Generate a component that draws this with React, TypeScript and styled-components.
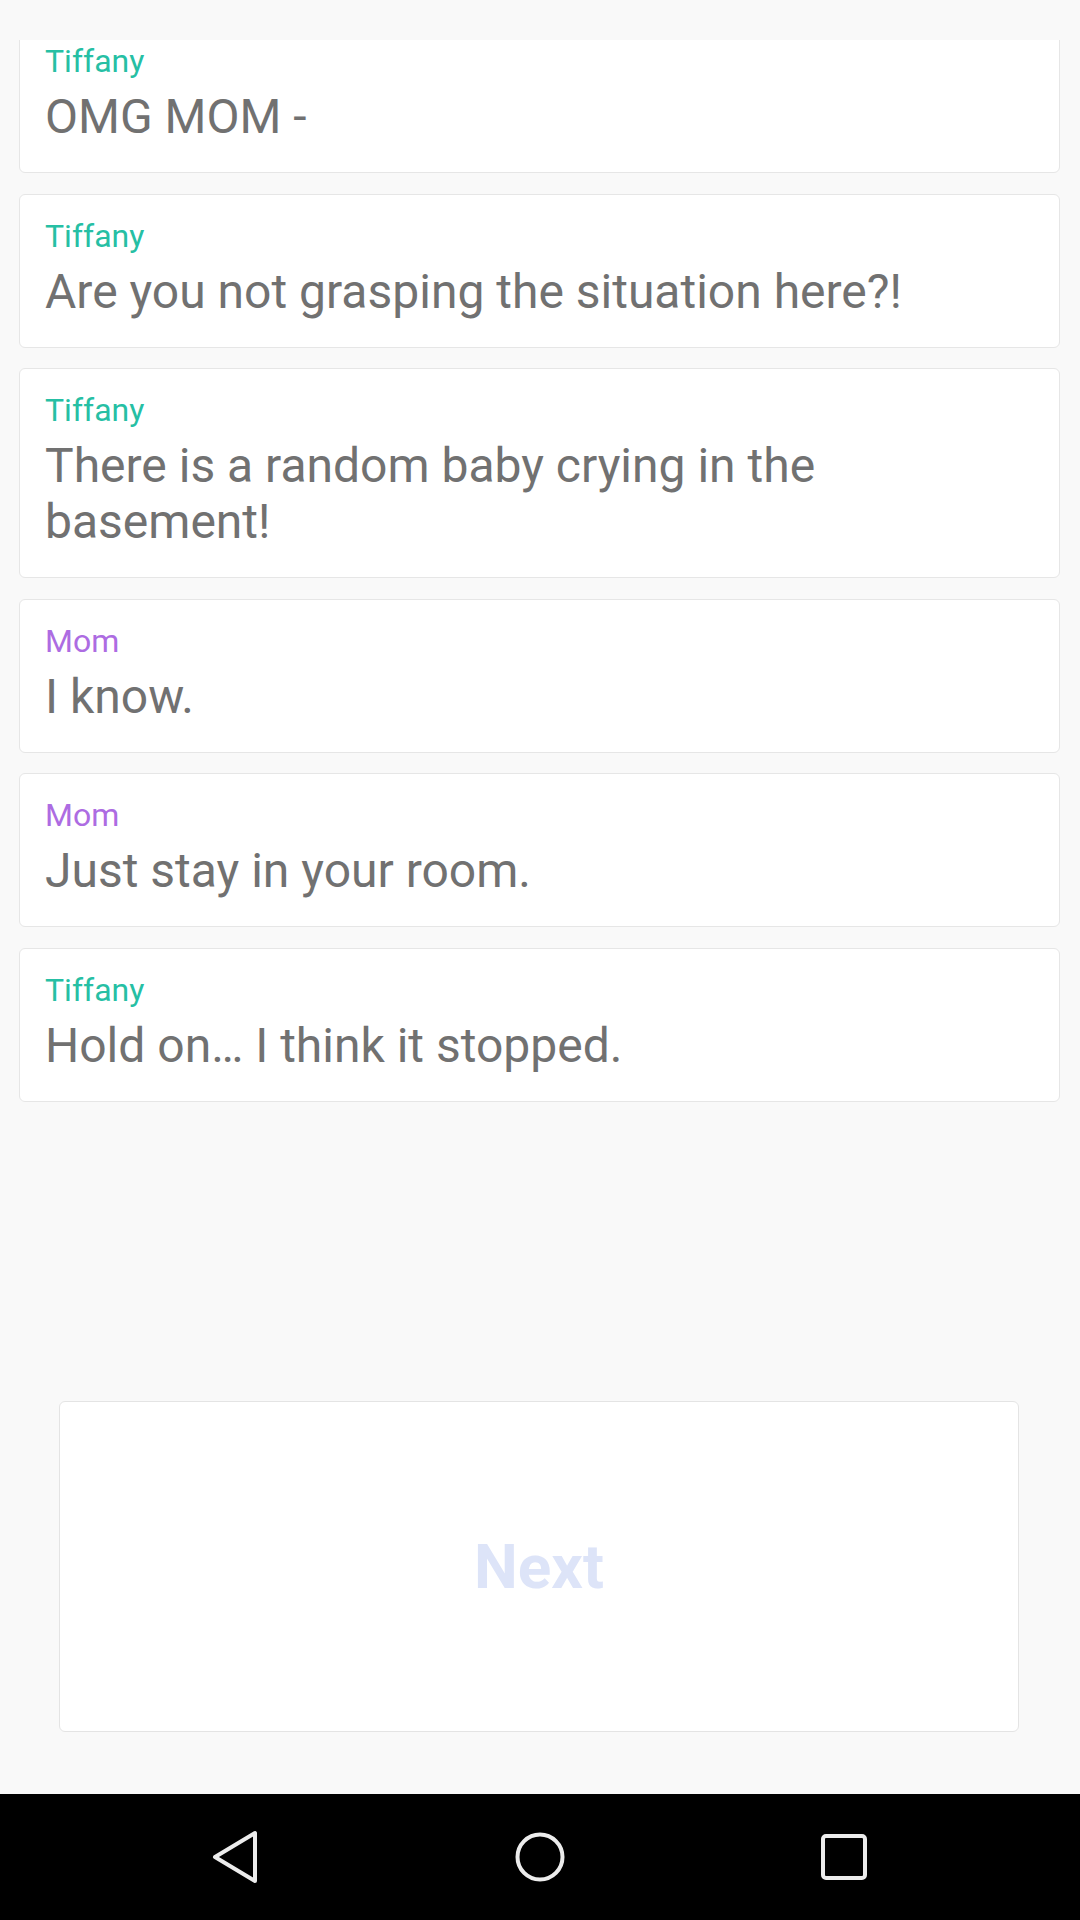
import React from "react";
import styled, { createGlobalStyle } from "styled-components";

type Speaker = "Tiffany" | "Mom";

const messages: { from: Speaker; text: string }[] = [
  { from: "Tiffany", text: "OMG MOM -" },
  { from: "Tiffany", text: "Are you not grasping the situation here?!" },
  { from: "Tiffany", text: "There is a random baby crying in the basement!" },
  { from: "Mom", text: "I know." },
  { from: "Mom", text: "Just stay in your room." },
  { from: "Tiffany", text: "Hold on… I think it stopped." },
];

const speakerColors: Record<Speaker, string> = {
  Tiffany: "#26bfa4",
  Mom: "#ad6ce2",
};

function App() {
  return (
    <>
      <GlobalStyle />
      <Screen>
        <Content>
          <ListViewport>
            <List>
              {messages.map((m, i) => (
                <Card key={i}>
                  <Name $color={speakerColors[m.from]}>{m.from}</Name>
                  <Message>{m.text}</Message>
                </Card>
              ))}
            </List>
          </ListViewport>
          <Footer>
            <NextButton>Next</NextButton>
          </Footer>
        </Content>
        <NavBar>
          <NavIcon>
            <svg width="60" height="60" viewBox="0 0 60 60">
              <path
                d="M49 6 L49 54 L9 30 Z"
                fill="none"
                stroke="#ececec"
                strokeWidth="4"
                strokeLinejoin="round"
              />
            </svg>
          </NavIcon>
          <NavIcon>
            <svg width="60" height="60" viewBox="0 0 60 60">
              <circle
                cx="30"
                cy="30"
                r="22.5"
                fill="none"
                stroke="#ececec"
                strokeWidth="4"
              />
            </svg>
          </NavIcon>
          <NavIcon>
            <svg width="60" height="60" viewBox="0 0 60 60">
              <rect
                x="9"
                y="9"
                width="42"
                height="42"
                rx="3"
                fill="none"
                stroke="#ececec"
                strokeWidth="4"
              />
            </svg>
          </NavIcon>
        </NavBar>
      </Screen>
    </>
  );
}

const GlobalStyle = createGlobalStyle`
  body {
    margin: 0;
    background: #f9f9f9;
    font-family: Roboto, "Noto Sans", sans-serif;
  }
`;

const Screen = styled.div`
  width: 1080px;
  height: 1920px;
  display: flex;
  flex-direction: column;
  background: #f9f9f9;
`;

const Content = styled.div`
  flex: 1;
  display: flex;
  flex-direction: column;
`;

const ListViewport = styled.div`
  margin-top: 40px;
  overflow: hidden;
`;

const List = styled.div`
  margin-top: -21px;
  padding: 0 20px 0 19px;
  display: flex;
  flex-direction: column;
  gap: 20.6px;
`;

const Card = styled.div`
  background: #fff;
  border: 1px solid #e6e6e6;
  border-radius: 6px;
  padding: 22px 60px 27px 25px;
`;

const Name = styled.div<{ $color: string }>`
  color: ${(p) => p.$color};
  font-size: 32px;
  line-height: 38px;
  margin-bottom: 9px;
`;

const Message = styled.div`
  color: #717171;
  font-size: 48px;
  line-height: 56px;
`;

const Footer = styled.div`
  margin-top: auto;
  padding: 0 61px 62px 59px;
`;

const NextButton = styled.div`
  height: 329px;
  background: #fff;
  border: 1.5px solid #e4e4e4;
  border-radius: 6px;
  display: flex;
  align-items: center;
  justify-content: center;
  color: #dde4f8;
  font-size: 62px;
  font-weight: 700;
`;

const NavBar = styled.div`
  height: 126px;
  background: #000;
  display: flex;
  align-items: center;
  justify-content: center;
  gap: 244px;
`;

const NavIcon = styled.div`
  width: 60px;
  height: 60px;
  display: flex;
`;

export default App;
